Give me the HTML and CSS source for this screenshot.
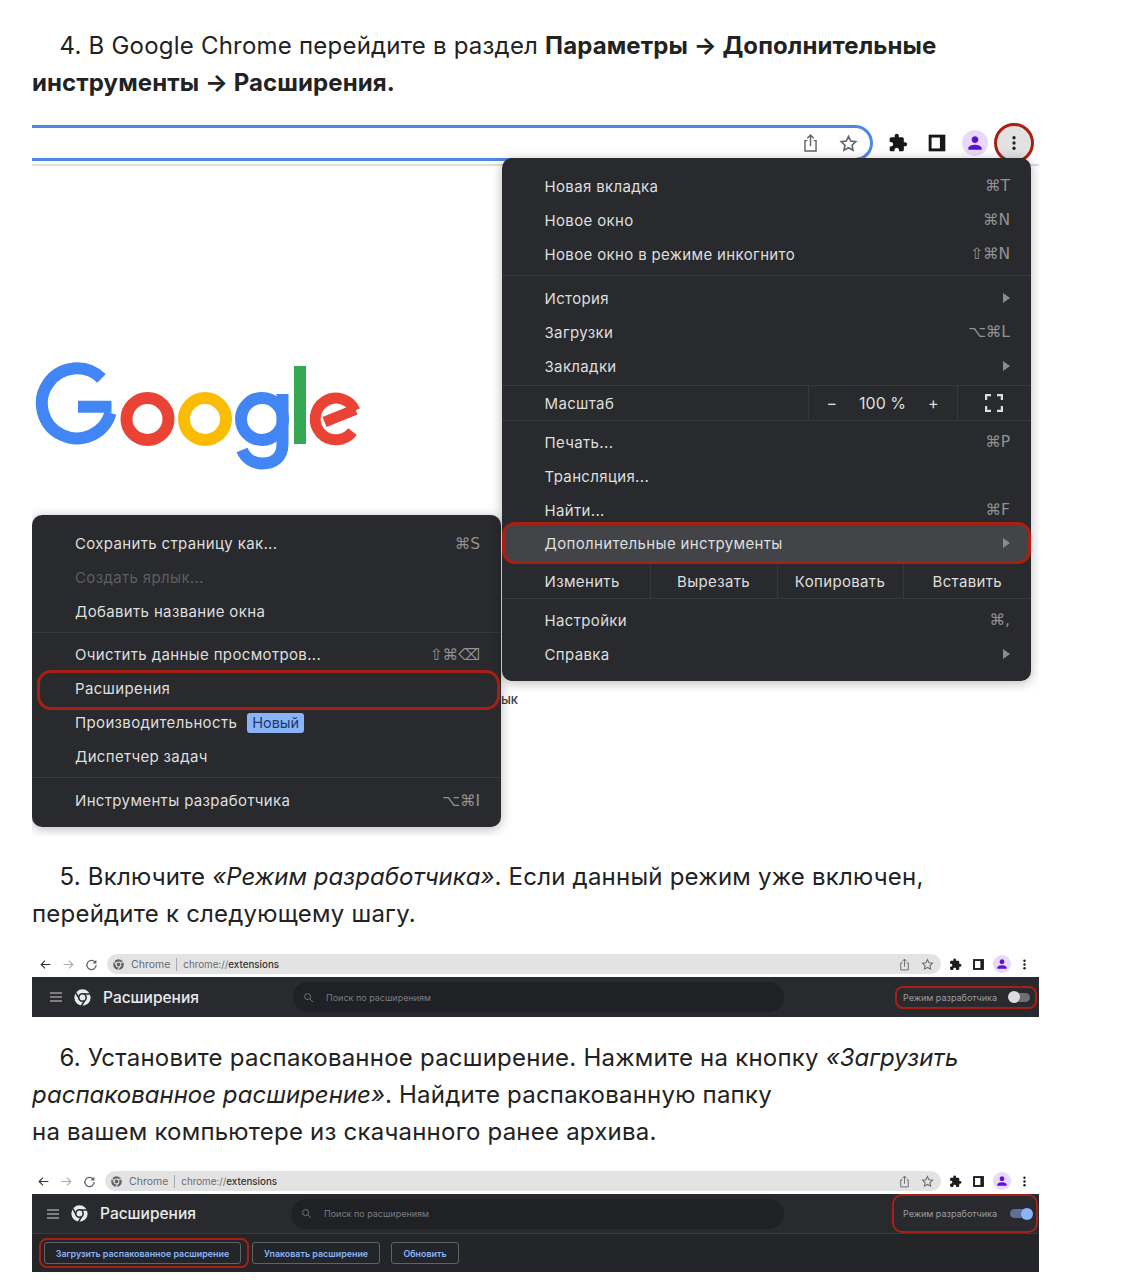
FILE: index.html
```html
<!DOCTYPE html>
<html lang="ru">
<head>
  <meta charset="utf-8">
  <title>Установка расширения</title>
  <link rel="stylesheet" href="styles.css">
</head>
<body>
  <svg class="icon-defs" xmlns="http://www.w3.org/2000/svg">
    <symbol id="i-share" viewBox="0 0 24 24"><path d="M8 9H5v13h14V9h-3M12 16V2M8 6l4-4 4 4" fill="none" stroke="currentColor" stroke-width="1.8"/></symbol>
    <symbol id="i-star" viewBox="0 0 24 24"><path d="M12 3l2.8 5.9 6.4.8-4.7 4.4 1.2 6.4L12 17.4l-5.7 3.1 1.2-6.4-4.7-4.4 6.4-.8z" fill="none" stroke="currentColor" stroke-width="2"/></symbol>
    <symbol id="i-puzzle" viewBox="0 0 24 24"><path d="M20.5 11H19V7c0-1.1-.9-2-2-2h-4V3.5C13 2.12 11.88 1 10.5 1S8 2.12 8 3.5V5H4c-1.1 0-1.99.9-1.99 2v3.8H3.5c1.49 0 2.7 1.21 2.7 2.7s-1.21 2.7-2.7 2.7H2V20c0 1.1.9 2 2 2h3.8v-1.5c0-1.49 1.21-2.7 2.7-2.7 1.49 0 2.7 1.21 2.7 2.7V22H17c1.1 0 2-.9 2-2v-4h1.5c1.38 0 2.5-1.12 2.5-2.5S21.88 11 20.5 11z" fill="currentColor"/></symbol>
    <symbol id="i-panel" viewBox="0 0 24 24"><rect x="2" y="2" width="20" height="20" fill="currentColor"/><rect x="5.5" y="5.5" width="10" height="13" fill="#fff"/></symbol>
    <symbol id="i-person" viewBox="0 0 24 24"><path d="M12 12c2.21 0 4-1.79 4-4s-1.79-4-4-4-4 1.79-4 4 1.79 4 4 4zm0 2c-2.67 0-8 1.34-8 4v2h16v-2c0-2.66-5.33-4-8-4z" fill="currentColor"/></symbol>
    <symbol id="i-dots" viewBox="0 0 24 24"><circle cx="12" cy="5" r="2.2" fill="currentColor"/><circle cx="12" cy="12" r="2.2" fill="currentColor"/><circle cx="12" cy="19" r="2.2" fill="currentColor"/></symbol>
    <symbol id="i-back" viewBox="0 0 24 24"><path d="M21 12H4M11 5l-7 7 7 7" fill="none" stroke="currentColor" stroke-width="2"/></symbol>
    <symbol id="i-forward" viewBox="0 0 24 24"><path d="M3 12h17M13 5l7 7-7 7" fill="none" stroke="currentColor" stroke-width="2"/></symbol>
    <symbol id="i-reload" viewBox="0 0 24 24"><path d="M18.5 7.5A8.5 8.5 0 1 0 20.5 13" fill="none" stroke="currentColor" stroke-width="2.4"/><path d="M21 3v7h-7z" fill="currentColor"/></symbol>
    <symbol id="i-search" viewBox="0 0 24 24"><circle cx="10" cy="10" r="6.5" fill="none" stroke="currentColor" stroke-width="2"/><path d="M15 15l6.5 6.5" stroke="currentColor" stroke-width="2"/></symbol>
    <symbol id="i-menu" viewBox="0 0 12 10"><path d="M0 1h12M0 5h12M0 9h12" stroke="currentColor" stroke-width="1.4"/></symbol>
    <symbol id="i-chrome" viewBox="0 0 24 24">
      <circle cx="12" cy="12" r="11.5" fill="currentColor"/>
      <path d="M12 7h11M8 14.5L2.5 5M16 14.5L10.5 24" stroke="var(--logo-cut)" stroke-width="2.2"/>
      <circle cx="12" cy="12" r="5.2" fill="currentColor" stroke="var(--logo-cut)" stroke-width="2.2"/>
    </symbol>
  </svg>

  <main class="article">
    <p class="step">4. В Google Chrome перейдите в раздел <b>Параметры → Дополнительные<br>инструменты → Расширения.</b></p>

    <figure class="shot shot-menus">
      <div class="big-bar">
        <div class="omnibox">
          <svg class="ico-share"><use href="#i-share"/></svg>
          <svg class="ico-star"><use href="#i-star"/></svg>
        </div>
        <span class="big-slot"><svg class="ico-big"><use href="#i-puzzle"/></svg></span>
        <span class="big-slot"><svg class="ico-big"><use href="#i-panel"/></svg></span>
        <span class="big-slot"><span class="avatar"><svg><use href="#i-person"/></svg></span></span>
        <span class="big-slot"><span class="more-btn"><svg><use href="#i-dots"/></svg></span></span>
      </div>

      <svg class="google-logo" viewBox="35 360 330 115" aria-label="Google">
        <g fill="none" stroke-width="12">
          <path d="M101.5 378.5A35 35 0 1 0 110.5 413" stroke="#4285f4"/>
          <path d="M78 406.7h33.5" stroke="#4285f4"/>
          <circle cx="147.5" cy="419" r="21" stroke="#ea4335"/>
          <circle cx="205" cy="419" r="21" stroke="#fbbc05"/>
          <circle cx="262" cy="419" r="21" stroke="#4285f4"/>
          <path d="M282.5 394v50c0 14-9.5 19.5-20 19.5-10.5 0-17.5-6.5-20.5-13.5" stroke="#4285f4"/>
          <path d="M300 366v78" stroke="#34a853"/>
          <path d="M355.5 409.5l-31 12.500" stroke="#ea4335" stroke-width="11"/>
          <path d="M355 410.5A20.8 20.8 0 1 0 352.5 431.6" stroke="#ea4335" stroke-width="11"/>
        </g>
      </svg>

      <span class="page-word">ярлык</span>

      <div class="menu menu-main">
        <div class="menu-group group-first">
          <div class="menu-row"><span>Новая вкладка</span><kbd>⌘T</kbd></div>
          <div class="menu-row"><span>Новое окно</span><kbd>⌘N</kbd></div>
          <div class="menu-row"><span>Новое окно в режиме инкогнито</span><kbd>⇧⌘N</kbd></div>
        </div>
        <div class="menu-group group-tight">
          <div class="menu-row"><span>История</span><i class="arrow"></i></div>
          <div class="menu-row"><span>Загрузки</span><kbd>⌥⌘L</kbd></div>
          <div class="menu-row"><span>Закладки</span><i class="arrow"></i></div>
        </div>
        <div class="zoom-row">
          <span class="zoom-label">Масштаб</span>
          <div class="zoom-controls"><span>−</span><span class="zoom-value">100 %</span><span>+</span></div>
          <div class="zoom-full">
            <svg viewBox="0 0 18 18"><path d="M1 6V1h5M12 1h5v5M17 12v5h-5M6 17H1v-5" fill="none" stroke="currentColor" stroke-width="2.4"/></svg>
          </div>
        </div>
        <div class="menu-group group-tools">
          <div class="menu-row"><span>Печать...</span><kbd>⌘P</kbd></div>
          <div class="menu-row"><span>Трансляция...</span></div>
          <div class="menu-row"><span>Найти...</span><kbd>⌘F</kbd></div>
          <div class="menu-row row-active"><span>Дополнительные инструменты</span><i class="arrow"></i></div>
        </div>
        <div class="edit-row">
          <span class="edit-label">Изменить</span>
          <span class="edit-cell">Вырезать</span>
          <span class="edit-cell">Копировать</span>
          <span class="edit-cell">Вставить</span>
        </div>
        <div class="menu-group group-last group-help">
          <div class="menu-row"><span>Настройки</span><kbd>⌘,</kbd></div>
          <div class="menu-row"><span>Справка</span><i class="arrow"></i></div>
        </div>
      </div>

      <div class="menu menu-sub">
        <div class="menu-group group-first">
          <div class="menu-row"><span>Сохранить страницу как...</span><kbd>⌘S</kbd></div>
          <div class="menu-row row-off"><span>Создать ярлык...</span></div>
          <div class="menu-row"><span>Добавить название окна</span></div>
        </div>
        <div class="menu-group group-tight group-sub">
          <div class="menu-row"><span>Очистить данные просмотров...</span><kbd>⇧⌘⌫</kbd></div>
          <div class="menu-row row-ring"><span>Расширения</span></div>
          <div class="menu-row"><span>Производительность<em class="badge-new">Новый</em></span></div>
          <div class="menu-row"><span>Диспетчер задач</span></div>
        </div>
        <div class="menu-group group-last">
          <div class="menu-row"><span>Инструменты разработчика</span><kbd>⌥⌘I</kbd></div>
        </div>
      </div>
    </figure>

    <p class="step">5. Включите <i>«Режим разработчика»</i>. Если данный режим уже включен,<br>перейдите к следующему шагу.</p>

    <figure class="shot shot-ext shot-off">
      <div class="nav">
        <span class="nav-slot"><svg><use href="#i-back"/></svg></span>
        <span class="nav-slot nav-dim"><svg><use href="#i-forward"/></svg></span>
        <span class="nav-slot"><svg><use href="#i-reload"/></svg></span>
        <div class="pill">
          <svg class="pill-logo"><use href="#i-chrome"/></svg>
          <span class="pill-site">Chrome</span>
          <span class="pill-url">chrome://<b>extensions</b></span>
          <span class="nav-slot pill-first"><svg><use href="#i-share"/></svg></span>
          <span class="nav-slot"><svg><use href="#i-star"/></svg></span>
        </div>
        <span class="nav-slot nav-dark"><svg><use href="#i-puzzle"/></svg></span>
        <span class="nav-slot nav-dark"><svg><use href="#i-panel"/></svg></span>
        <span class="nav-slot"><span class="avatar avatar-small"><svg><use href="#i-person"/></svg></span></span>
        <span class="nav-slot nav-dark"><svg><use href="#i-dots"/></svg></span>
      </div>
      <div class="ext-head">
        <div class="ext-title">
          <svg class="ext-menu"><use href="#i-menu"/></svg>
          <svg class="ext-logo"><use href="#i-chrome"/></svg>
          <span>Расширения</span>
        </div>
        <div class="ext-search"><svg><use href="#i-search"/></svg><span>Поиск по расширениям</span></div>
        <div class="dev-mode"><span>Режим разработчика</span><i class="toggle"></i></div>
      </div>
    </figure>

    <p class="step">6. Установите распакованное расширение. Нажмите на кнопку <i>«Загрузить<br>распакованное расширение»</i>. Найдите распакованную папку<br>на вашем компьютере из скачанного ранее архива.</p>

    <figure class="shot shot-ext shot-on">
      <div class="nav">
        <span class="nav-slot"><svg><use href="#i-back"/></svg></span>
        <span class="nav-slot nav-dim"><svg><use href="#i-forward"/></svg></span>
        <span class="nav-slot"><svg><use href="#i-reload"/></svg></span>
        <div class="pill">
          <svg class="pill-logo"><use href="#i-chrome"/></svg>
          <span class="pill-site">Chrome</span>
          <span class="pill-url">chrome://<b>extensions</b></span>
          <span class="nav-slot pill-first"><svg><use href="#i-share"/></svg></span>
          <span class="nav-slot"><svg><use href="#i-star"/></svg></span>
        </div>
        <span class="nav-slot nav-dark"><svg><use href="#i-puzzle"/></svg></span>
        <span class="nav-slot nav-dark"><svg><use href="#i-panel"/></svg></span>
        <span class="nav-slot"><span class="avatar avatar-small"><svg><use href="#i-person"/></svg></span></span>
        <span class="nav-slot nav-dark"><svg><use href="#i-dots"/></svg></span>
      </div>
      <div class="ext-head">
        <div class="ext-title">
          <svg class="ext-menu"><use href="#i-menu"/></svg>
          <svg class="ext-logo"><use href="#i-chrome"/></svg>
          <span>Расширения</span>
        </div>
        <div class="ext-search"><svg><use href="#i-search"/></svg><span>Поиск по расширениям</span></div>
        <div class="dev-mode"><span>Режим разработчика</span><i class="toggle"></i></div>
      </div>
      <div class="ext-actions">
        <span class="ext-btn ext-btn-ring">Загрузить распакованное расширение</span>
        <span class="ext-btn ext-btn-pack">Упаковать расширение</span>
        <span class="ext-btn ext-btn-update">Обновить</span>
      </div>
    </figure>
  </main>
</body>
</html>
```

FILE: styles.css
```css
body {
  margin: 0;
  background: #fff;
  font-family: Inter, "DejaVu Sans", sans-serif;
}

.icon-defs {
  display: none;
}

.article {
  width: 1007px;
  margin-left: 32px;
  padding-top: 27px;
  --ring: #a81f14;
}

.step {
  margin: 0;
  font-size: 24px;
  line-height: 37px;
  letter-spacing: 0.22px;
  text-indent: 27.5px;
  color: #222;
  white-space: nowrap;
}

.step b {
  font-weight: 700;
  letter-spacing: 0.1px;
}

.step i {
  letter-spacing: 0;
}

.shot {
  position: relative;
  margin: 21px 0 22px;
  overflow: hidden;
}

/* first screenshot */
.shot-menus {
  height: 714px;
}

.big-bar {
  display: flex;
  height: 42px;
  border-bottom: 2px solid #dde0e2;
}

.omnibox {
  box-sizing: border-box;
  display: flex;
  align-items: center;
  justify-content: flex-end;
  gap: 19px;
  width: 841px;
  height: 36px;
  margin: 3px 6px 0 0;
  padding-right: 12px;
  border: 3px solid #4f88e2;
  border-left: 0;
  border-radius: 0 18px 18px 0;
  color: #5f6368;
}

.ico-share {
  width: 19px;
  height: 20px;
}

.ico-star {
  width: 19px;
  height: 19px;
}

.big-slot {
  display: flex;
  align-items: center;
  justify-content: center;
  width: 38.5px;
  color: #17181a;
}

.ico-big {
  width: 20px;
  height: 20px;
}

.avatar {
  display: flex;
  align-items: center;
  justify-content: center;
  flex: none;
  width: 26px;
  height: 26px;
  border-radius: 50%;
  background: #e8d9fb;
  color: #5e0fd6;
}

.avatar svg {
  width: 20px;
  height: 20px;
}

.avatar-small {
  width: 18px;
  height: 18px;
}

.avatar-small svg {
  width: 14px;
  height: 14px;
}

.more-btn {
  position: relative;
  display: flex;
  align-items: center;
  justify-content: center;
  flex: none;
  width: 36px;
  height: 36px;
  border-radius: 50%;
  background: #e2e2e2;
  color: #222;
}

.more-btn svg {
  width: 18px;
  height: 18px;
}

.more-btn::after {
  content: "";
  position: absolute;
  inset: -2px;
  border: 3px solid var(--ring);
  border-radius: 50%;
}

.google-logo {
  position: absolute;
  left: 3px;
  top: 238px;
  width: 330px;
  height: 115px;
}

.page-word {
  position: absolute;
  right: 521px;
  top: 569px;
  font-size: 13px;
  font-weight: 500;
  color: #3c4043;
}

.menu {
  position: absolute;
  box-sizing: border-box;
  isolation: isolate;
  background: #292a2d;
  border-radius: 10px;
  box-shadow: 0 2px 12px rgba(0, 0, 0, 0.28);
  font-size: 15px;
  letter-spacing: 0.35px;
  color: #dedede;
}

.menu-main {
  left: 469.5px;
  top: 36px;
  width: 529.5px;
  z-index: 2;
}

.menu-sub {
  left: 0;
  top: 393px;
  width: 469px;
  z-index: 1;
}

.menu-group {
  padding: 5px 0 4px;
  border-bottom: 1px solid #37383b;
}

.group-first {
  padding-top: 11px;
}

.group-tight {
  padding-bottom: 2px;
}

.group-sub {
  padding-bottom: 3px;
}

.group-tools {
  padding-top: 4px;
  border-bottom: 0;
}

.group-last {
  padding-bottom: 10px;
  border-bottom: 0;
}

.group-help {
  padding-top: 4px;
}

.menu-row {
  position: relative;
  box-sizing: border-box;
  display: flex;
  align-items: center;
  justify-content: space-between;
  height: 34px;
  padding: 0 21px 0 43px;
}

/* submenu text sits a touch higher in its rows */
.menu-sub .menu-row {
  padding-bottom: 1px;
}

.menu-sub .group-first {
  padding: 12px 0 3px;
}

.menu-sub .group-last {
  padding: 6px 0 9px;
}

.menu-row kbd {
  font-family: "DejaVu Sans", sans-serif;
  font-size: 15.5px;
  letter-spacing: 0;
  color: #929293;
}

.arrow {
  width: 0;
  height: 0;
  border-left: 7px solid #8b8b8d;
  border-top: 5px solid transparent;
  border-bottom: 5px solid transparent;
}

.row-off {
  color: #5d5e61;
}

.row-active {
  margin-top: -1px;
}

.row-active::before {
  content: "";
  position: absolute;
  inset: -4px 0;
  z-index: -1;
  border: 3px solid var(--ring);
  border-radius: 13px;
  background: #434447;
}

.row-ring::before {
  content: "";
  position: absolute;
  inset: -2px 1px -4px 5px;
  border: 3px solid var(--ring);
  border-radius: 14px;
}

.badge-new {
  display: inline-block;
  margin-left: 10px;
  padding: 0 5px;
  border-radius: 3px;
  background: #8ab4f8;
  color: #1d3a68;
  font-style: normal;
  font-size: 14.5px;
  letter-spacing: 0;
  line-height: 20px;
}

.zoom-row {
  display: grid;
  grid-template-columns: 306px 149px 1fr;
  height: 34px;
  border-bottom: 1px solid #37383b;
}

.zoom-label {
  display: flex;
  align-items: center;
  padding-left: 43px;
}

.zoom-controls,
.zoom-full {
  display: flex;
  align-items: center;
  justify-content: center;
  border-left: 1px solid #37383b;
}

.zoom-controls {
  gap: 22px;
  font-size: 16px;
  letter-spacing: 0;
}

.zoom-full {
  justify-content: flex-start;
  padding-left: 27px;
}

.zoom-full svg {
  width: 18px;
  height: 18px;
}

.edit-row {
  display: grid;
  grid-template-columns: 148px 127px 126px 1fr;
  height: 33px;
  margin-top: 1px;
  border-bottom: 1px solid #37383b;
}

.edit-label,
.edit-cell {
  display: flex;
  align-items: center;
}

.edit-label {
  padding-left: 43px;
}

.edit-cell {
  justify-content: center;
  border-left: 1px solid #37383b;
}

/* chrome://extensions screenshots */
.shot-ext {
  --logo-cut: #292a2d;
}

.nav {
  display: flex;
  align-items: flex-start;
  box-sizing: border-box;
  height: 24px;
  padding: 1px 3px 0 2px;
  color: #5f6368;
}

.nav-slot {
  display: flex;
  align-items: center;
  justify-content: center;
  flex: none;
  width: 23px;
  height: 20px;
}

.nav-slot svg {
  width: 13px;
  height: 13px;
}

.nav-slot .avatar-small svg {
  width: 14px;
  height: 14px;
}

.nav-dim {
  color: #a8abaf;
}

.nav-dark {
  color: #1c1c1e;
}

.nav > .nav-slot:first-child {
  color: #333;
}

.pill {
  display: flex;
  align-items: center;
  flex: 1;
  height: 20px;
  margin: 0 3px 0 4px;
  padding: 0 2px 0 6px;
  border-radius: 10px;
  background: #e3e3e3;
  font-size: 10.5px;
  color: #6a6c70;
  --logo-cut: #e3e3e3;
}

.pill-logo {
  flex: none;
  width: 11px;
  height: 11px;
  margin-right: 7px;
  color: #5f6368;
}

.pill-site {
  padding-right: 6px;
  border-right: 1px solid #a9abae;
}

.pill-url {
  margin-left: 6px;
  font-size: 9.8px;
}

.pill-url b {
  font-weight: 500;
  color: #333;
}

.pill-first {
  margin-left: auto;
}

.ext-head {
  display: flex;
  align-items: center;
  box-sizing: border-box;
  height: 40px;
  background: #292a2e;
}

.ext-title {
  display: flex;
  align-items: center;
  flex: none;
  box-sizing: border-box;
  width: 261px;
  padding-left: 18px;
  font-size: 15.5px;
  font-weight: 500;
  color: #e8eaed;
}

.ext-menu {
  flex: none;
  width: 12px;
  height: 10px;
  margin-right: 12px;
  color: #9a9b9e;
}

.ext-logo {
  flex: none;
  width: 17px;
  height: 17px;
  margin-right: 12px;
}

.ext-search {
  display: flex;
  align-items: center;
  width: 491px;
  height: 30px;
  border-radius: 15px;
  background: #202124;
  font-size: 9px;
  color: #7b7c80;
}

.ext-search svg {
  width: 11px;
  height: 11px;
  margin: 0 12px 0 10px;
  color: #7b7c80;
}

.dev-mode {
  position: relative;
  box-sizing: border-box;
  display: flex;
  align-items: center;
  justify-content: space-between;
  width: 142px;
  height: 23px;
  margin: 0 2px 0 auto;
  padding: 0 5px 0 6px;
  border: 2px solid var(--ring);
  border-radius: 8px;
  font-size: 9px;
  color: #9c9c9e;
}

.toggle {
  position: relative;
  width: 20px;
  height: 9px;
  border-radius: 5px;
  background: #6e6f72;
}

.toggle::after {
  content: "";
  position: absolute;
  left: -2px;
  top: -1.5px;
  width: 12px;
  height: 12px;
  border-radius: 50%;
  background: #dcdcdc;
}

.shot-on .nav {
  height: 23px;
  padding-top: 0;
  padding-left: 0;
}

.shot-on .ext-title {
  width: 259px;
  padding-left: 15px;
}

.shot-on .ext-search {
  width: 493px;
}

.shot-on .ext-head {
  border-bottom: 1px solid #3a3b3e;
}

.shot-on .dev-mode {
  width: 146px;
  height: 39px;
  margin-right: 1px;
  border-radius: 10px;
  padding: 0 5px 0 9px;
}

.shot-on .toggle {
  width: 21px;
  background: #5d7196;
}

.shot-on .toggle::after {
  left: auto;
  right: -2px;
  background: #8ab4f8;
}

.ext-actions {
  display: flex;
  gap: 11px;
  height: 38px;
  padding: 8px 12px;
  box-sizing: border-box;
  background: #242529;
}

.ext-btn {
  position: relative;
  box-sizing: border-box;
  display: flex;
  align-items: center;
  justify-content: center;
  height: 22px;
  border: 1px solid #5f6368;
  border-radius: 3px;
  font-size: 8.9px;
  font-weight: 600;
  color: #8ab4f8;
}

.ext-btn-ring {
  width: 197px;
}

.ext-btn-pack {
  width: 128px;
}

.ext-btn-update {
  width: 68px;
}

.ext-btn-ring::after {
  content: "";
  position: absolute;
  inset: -5px -9px -5px -6px;
  border: 2px solid var(--ring);
  border-radius: 8px;
}
```
